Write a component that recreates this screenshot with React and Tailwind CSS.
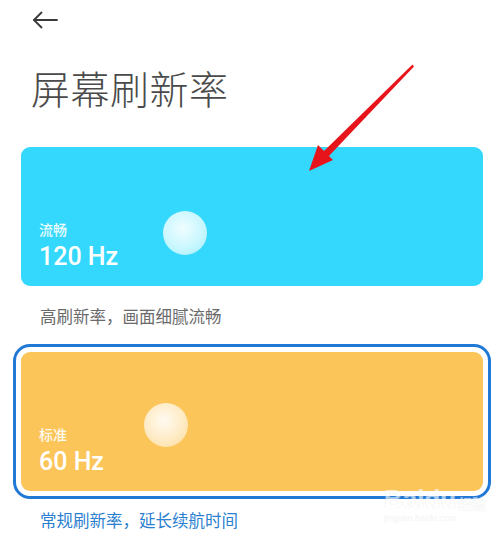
import React from "react";

const cjk = { fontFamily: '"Noto Sans CJK SC", "Noto Sans", sans-serif' };

function Card({ selected, color, label, hz, bubble, bubbleClass }) {
  return (
    <div
      className={`mx-[13px] w-[478px] rounded-[17px] border-[3px] p-[5px] ${
        selected ? "border-[#2179d6]" : "border-transparent"
      }`}
    >
      <div
        className={`relative flex h-[139px] flex-col justify-end rounded-[9px] pb-[15px] pl-[18px] ${color}`}
      >
        <div
          className={`absolute h-[44px] w-[44px] rounded-full ${bubbleClass}`}
          style={{ left: bubble[0] - 22, top: bubble[1] - 22 }}
        />
        <div className="relative text-[14px] font-medium leading-[18px] text-white/90" style={cjk}>
          {label}
        </div>
        <div
          className="relative mt-[5px] text-[25px] font-medium leading-[28px] text-white"
          style={{ fontFamily: 'Roboto, "Noto Sans", sans-serif' }}
        >
          {hz}
        </div>
      </div>
    </div>
  );
}

export default function App() {
  return (
    <div className="relative h-[539px] w-[500px] overflow-hidden bg-white" style={cjk}>
      <div className="pl-[30px] pt-[6px]">
        <svg width="30" height="28" viewBox="0 0 30 28" fill="none" stroke="#3a3a3a" strokeWidth="1.8" strokeLinecap="round" strokeLinejoin="round">
          <path d="M27 14H4" />
          <path d="M11.5 6.5L4 14l7.5 7.5" />
        </svg>
      </div>
      <h1 className="mt-[30px] pl-[31px] text-[39px] font-light leading-[46px] tracking-[0.5px] text-[#4a4a4a]">
        屏幕刷新率
      </h1>
      <div className="mt-[29px]">
        <Card
          color="bg-[#34d8fc]"
          label="流畅"
          hz="120 Hz"
          bubble={[164, 86]}
          bubbleClass="bg-[radial-gradient(circle_at_45%_40%,#effdff_0%,#c9f7fe_55%,#9eeefc_100%)]"
        />
        <div className="mt-[12px] pl-[40px] text-[16.5px] leading-[20px] text-[#6a6a6a]">
          高刷新率，画面细腻流畅
        </div>
        <div className="mt-[18px]">
          <Card
            selected
            color="bg-[#fcc55a]"
            label="标准"
            hz="60 Hz"
            bubble={[145, 73]}
            bubbleClass="bg-[radial-gradient(circle_at_45%_40%,#fffaf0_0%,#feebc5_55%,#fcd993_100%)]"
          />
        </div>
        <div className="mt-[11px] pl-[40px] text-[16.5px] leading-[20px] text-[#2b7fd0]">
          常规刷新率，延长续航时间
        </div>
      </div>

      {/* red annotation arrow */}
      <svg className="pointer-events-none absolute left-0 top-0" width="500" height="539" viewBox="0 0 500 539">
        <polygon points="412.5,64.5 414,66.5 327,158 322,153" fill="#e8141c" />
        <polygon points="309,171 318,145 333,160" fill="#e8141c" />
      </svg>

      {/* watermark */}
      <div className="pointer-events-none absolute left-[384px] top-[486px] flex flex-col items-start opacity-60">
        <div className="flex items-end">
          <span className="text-[26px] font-bold leading-[26px] text-white [text-shadow:0_0_1px_#ccc]" style={{ fontFamily: '"Liberation Sans", sans-serif' }}>
            Baidu
          </span>
          <span className="ml-[2px] text-[14px] font-bold leading-[18px] text-white [text-shadow:0_0_1px_#ccc]">经验</span>
        </div>
        <div className="text-[9px] leading-[12px] text-[#ededed]" style={{ fontFamily: '"Liberation Sans", sans-serif' }}>
          jingyan.baidu.com
        </div>
      </div>
    </div>
  );
}
